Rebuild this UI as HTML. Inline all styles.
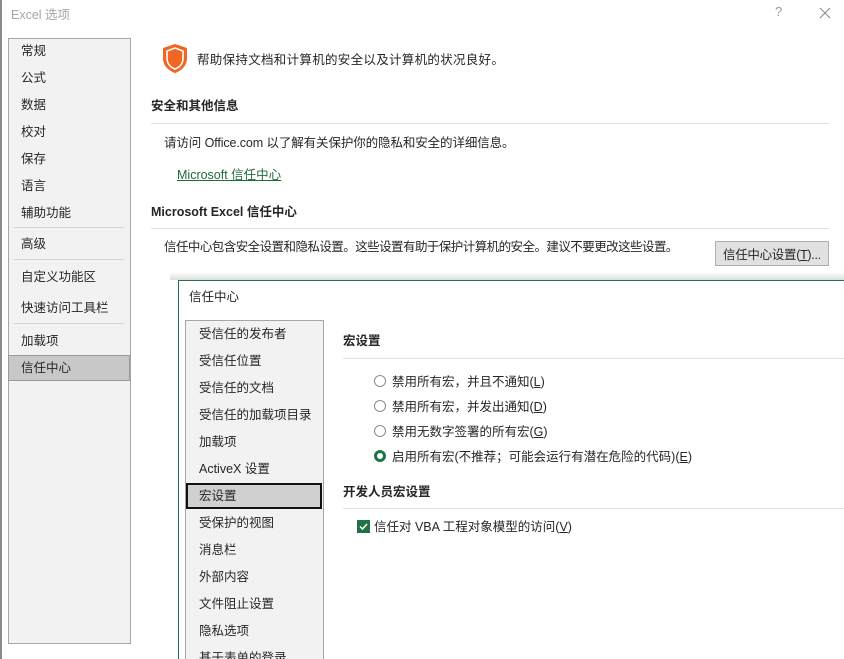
<!DOCTYPE html>
<html><head><meta charset="utf-8"><style>
*{margin:0;padding:0;box-sizing:border-box}
html,body{width:844px;height:659px;overflow:hidden}
body{background:#fff;position:relative;font-family:"Liberation Sans","Noto Sans CJK SC",sans-serif;font-size:12.5px;color:#262626}
.a{position:absolute;white-space:nowrap;margin-top:-2px}
.nav{position:absolute;left:8px;top:38px;width:123px;height:606px;background:#f2f2f2;border:1px solid #a6a6a6}
.sep{position:absolute;height:1px;background:#d4d4d4}
.b{font-weight:bold}
.hr{position:absolute;height:1px;background:#e1e1e1}
.radio{position:absolute;width:12px;height:12px;border:1px solid #8a8a8a;border-radius:50%;background:#fff}
</style></head><body>
<div style="position:absolute;left:0;top:0;width:2px;height:659px;background:#8a8a8a"></div>
<div class="a" style="left:11px;top:6px;color:#a6a6a6">Excel 选项</div>
<div class="a" style="left:775px;top:6px;color:#999;font-size:13px">?</div>
<svg style="position:absolute;left:819px;top:7px" width="12" height="12"><path d="M1 1L11 11M11 1L1 11" stroke="#888" stroke-width="1"/></svg>

<div class="nav"></div>
<div class="a" style="left:21px;top:42px">常规</div>
<div class="a" style="left:21px;top:69px">公式</div>
<div class="a" style="left:21px;top:96px">数据</div>
<div class="a" style="left:21px;top:123px">校对</div>
<div class="a" style="left:21px;top:150px">保存</div>
<div class="a" style="left:21px;top:177px">语言</div>
<div class="a" style="left:21px;top:204px">辅助功能</div>
<div class="sep" style="left:14px;top:227px;width:110px"></div>
<div class="a" style="left:21px;top:235px">高级</div>
<div class="sep" style="left:14px;top:259px;width:110px"></div>
<div class="a" style="left:21px;top:268px">自定义功能区</div>
<div class="a" style="left:21px;top:299px">快速访问工具栏</div>
<div class="sep" style="left:14px;top:323px;width:110px"></div>
<div class="a" style="left:21px;top:332px">加载项</div>
<div style="position:absolute;left:8px;top:355px;width:122px;height:26px;background:#c8c8c8;border:1px solid #9a9a9a"></div>
<div class="a" style="left:21px;top:359px">信任中心</div>

<svg style="position:absolute;left:162px;top:43px" width="26" height="31" viewBox="0 0 26 31"><path d="M13 1L25 5V15C25 23 19 28 13 30C7 28 1 23 1 15V5Z" fill="#f26522"/><path d="M13 5L21 8V15C21 21 17 24.5 13 26C9 24.5 5 21 5 15V8Z" fill="none" stroke="#fff" stroke-width="1.6"/></svg>
<div class="a" style="left:197px;top:51px;letter-spacing:0.3px">帮助保持文档和计算机的安全以及计算机的状况良好。</div>
<div class="a b" style="left:151px;top:97px">安全和其他信息</div>
<div class="hr" style="left:151px;top:123px;width:678px"></div>
<div class="a" style="left:164px;top:134px;letter-spacing:-0.1px">请访问 Office.com  以了解有关保护你的隐私和安全的详细信息。</div>
<div class="a" style="left:177px;top:166px;color:#1e6b3f;text-decoration:underline">Microsoft 信任中心</div>
<div class="a b" style="left:151px;top:203px">Microsoft Excel 信任中心</div>
<div class="hr" style="left:151px;top:228px;width:678px"></div>
<div class="a" style="left:164px;top:238px;letter-spacing:-0.55px">信任中心包含安全设置和隐私设置。这些设置有助于保护计算机的安全。建议不要更改这些设置。</div>
<div style="position:absolute;left:715px;top:241px;width:114px;height:25px;background:#e1e1e1;border:1px solid #adadad"></div>
<div class="a" style="left:723px;top:246px;letter-spacing:-0.3px">信任中心设置(<u>T</u>)...</div>

<div style="position:absolute;left:170px;top:272px;width:674px;height:8px;background:linear-gradient(#fff,#ddd)"></div>
<div style="position:absolute;left:178px;top:280px;width:680px;height:400px;background:#fff;border:1px solid #217346"></div>
<div class="a" style="left:189px;top:288px">信任中心</div>
<div style="position:absolute;left:185px;top:320px;width:139px;height:350px;background:#f2f2f2;border:1px solid #a6a6a6"></div>
<div style="position:absolute;left:186px;top:483px;width:136px;height:26px;background:#d0d0d0;border:2px solid #111"></div>
<div class="a" style="left:199px;top:325px">受信任的发布者</div>
<div class="a" style="left:199px;top:352px">受信任位置</div>
<div class="a" style="left:199px;top:379px">受信任的文档</div>
<div class="a" style="left:199px;top:406px">受信任的加载项目录</div>
<div class="a" style="left:199px;top:433px">加载项</div>
<div class="a" style="left:199px;top:460px">ActiveX 设置</div>
<div class="a" style="left:199px;top:487px">宏设置</div>
<div class="a" style="left:199px;top:514px">受保护的视图</div>
<div class="a" style="left:199px;top:541px">消息栏</div>
<div class="a" style="left:199px;top:568px">外部内容</div>
<div class="a" style="left:199px;top:595px">文件阻止设置</div>
<div class="a" style="left:199px;top:622px">隐私选项</div>
<div class="a" style="left:199px;top:649px">基于表单的登录</div>

<div class="a b" style="left:343px;top:332px">宏设置</div>
<div class="hr" style="left:343px;top:358px;width:501px"></div>
<div class="radio" style="left:374px;top:375px"></div>
<div class="a" style="left:392px;top:373px">禁用所有宏，并且不通知(<u>L</u>)</div>
<div class="radio" style="left:374px;top:400px"></div>
<div class="a" style="left:392px;top:398px">禁用所有宏，并发出通知(<u>D</u>)</div>
<div class="radio" style="left:374px;top:425px"></div>
<div class="a" style="left:392px;top:423px">禁用无数字签署的所有宏(<u>G</u>)</div>
<div class="radio" style="left:374px;top:450px;border:3px solid #217346"></div>
<div class="a" style="left:392px;top:448px">启用所有宏(不推荐；可能会运行有潜在危险的代码)(<u>E</u>)</div>
<div class="a b" style="left:343px;top:483px">开发人员宏设置</div>
<div class="hr" style="left:343px;top:508px;width:501px"></div>
<svg style="position:absolute;left:357px;top:520px" width="13" height="13"><rect width="13" height="13" fill="#217346"/><path d="M3 6.5L5.5 9L10 4" stroke="#fff" stroke-width="1.5" fill="none"/></svg>
<div class="a" style="left:374px;top:518px">信任对 VBA 工程对象模型的访问(<u>V</u>)</div>
</body></html>
